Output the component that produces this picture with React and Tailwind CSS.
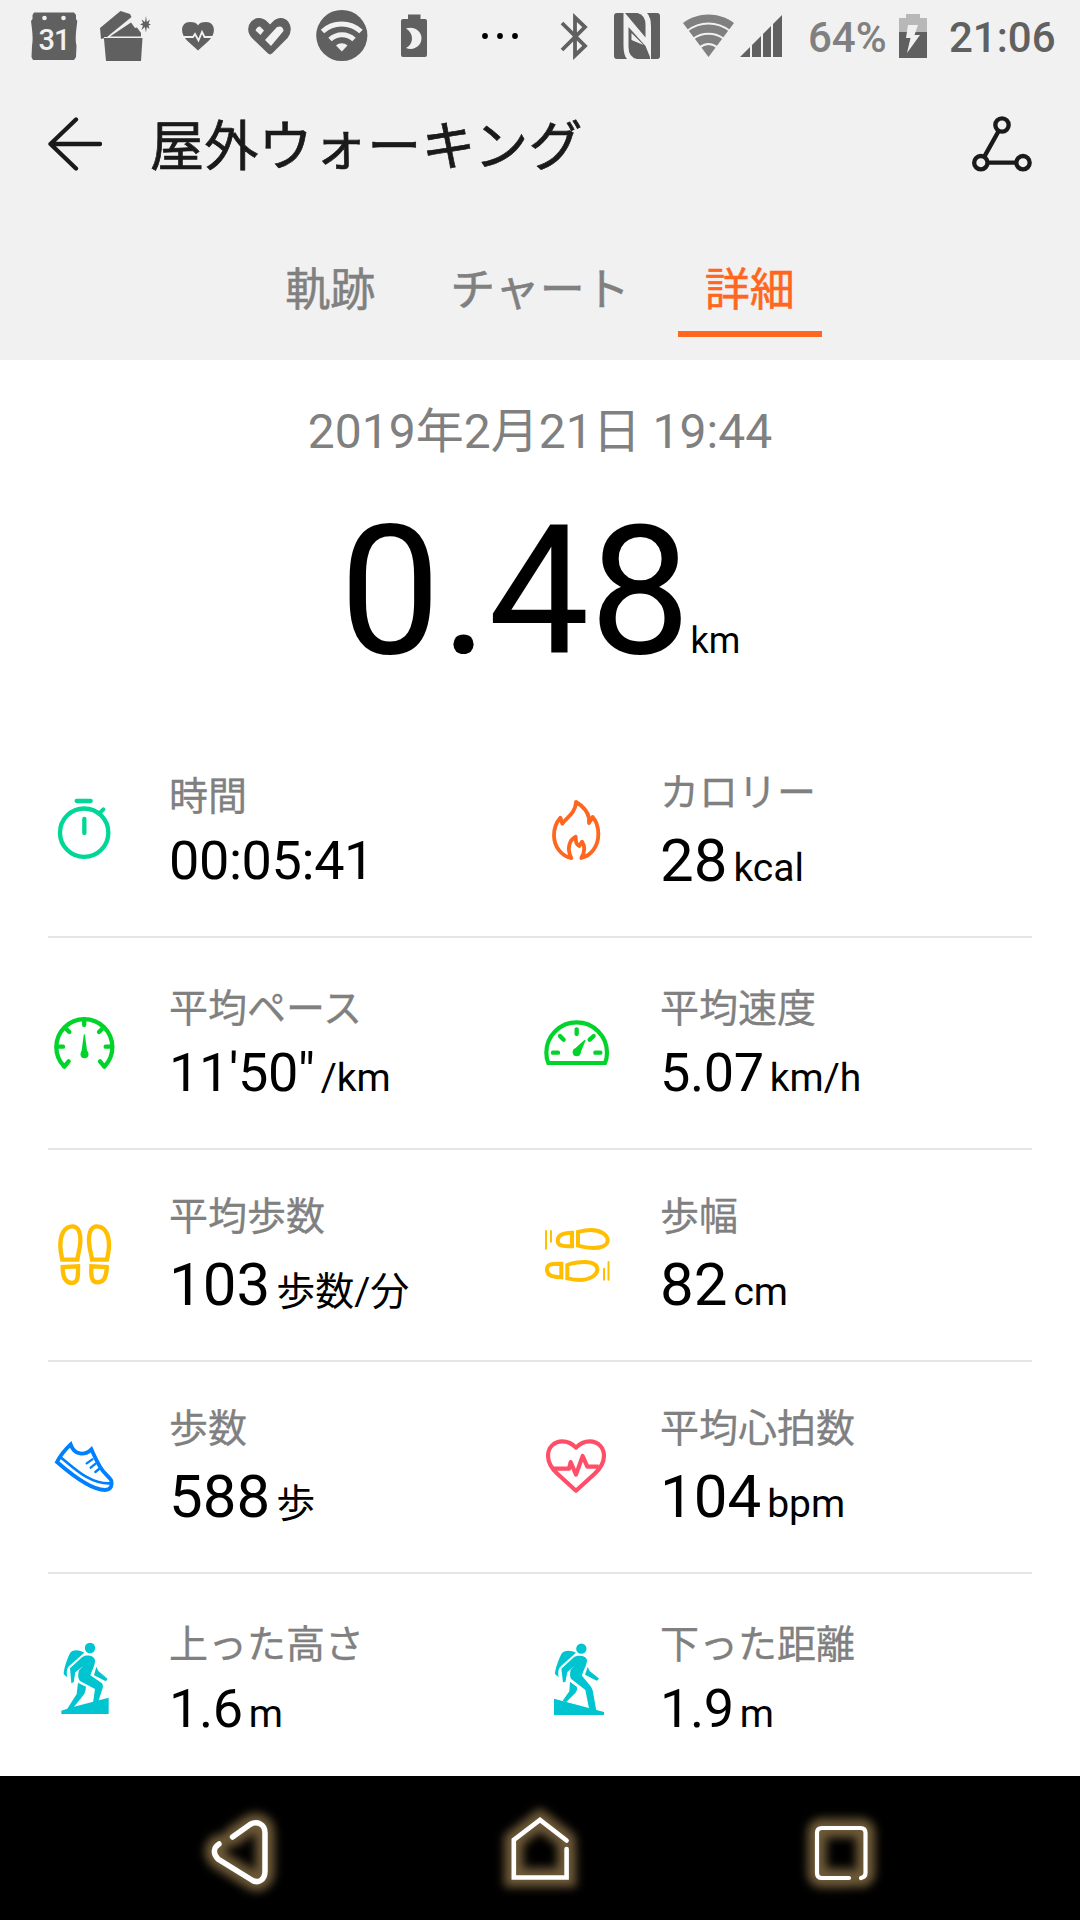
import clsx from 'clsx'

const GREY = '#606060'

/** Status bar glyph. Every glyph shares the bar's own coordinate space. */
function StatusIcon({ x, w, className, children }) {
  return (
    <svg width={w} height={72} viewBox={`${x} 0 ${w} 72`} fill={GREY} className={clsx('shrink-0', className)}>
      {children}
    </svg>
  )
}

function StatusBar() {
  return (
    <div className="flex h-[72px] pl-[31px] font-medium">
      <StatusIcon x={31} w={47}>
        <path d="M34 12.500H74L76 15V19L77.300 21C76 32 75 38 76.500 46L76 57L74 60H33L31.500 57L32 46C33.500 38 32 30 31 21L32.500 19V15Z" />
        <circle cx="44.500" cy="18" r="2.300" fill="#f1f1f1" />
        <circle cx="63.500" cy="18" r="2.300" fill="#f1f1f1" />
        <text x="38.500" y="50.300" fontSize="29" fontWeight="500" letterSpacing="-1" fill="#f1f1f1">31</text>
      </StatusIcon>
      <StatusIcon x={100} w={52} className="ml-[22px]">
        <path d="M100 28L120.500 11L130 14L131.500 17L107 37H104V39L106 61H141L142.500 38H104L101 39Z" />
        <path d="M110 36.500L131 22.500L135 28L137 27.500L141 33V36.500Z" />
        <path d="M146 16L146.800 22L150 19.500L148.500 23.500L151 24.500L148.500 25.500L149.500 29L146.800 27L146 32.500L144.800 27L141.500 30L143 25.500L140 24.500L143 23L141.500 19.500L145 22Z" />
      </StatusIcon>
      <StatusIcon x={182} w={32} className="ml-[30px]">
        <path d="M198 50.500L187.500 41C179 33 181 22 190 22C194 22 197 23 198 25.500C199 23 202 22 206 22C215 22 217 33 208.500 41Z" />
        <path d="M181 37H193L195 34L198.500 40.500L202 32L204.500 37H215" fill="none" stroke="#f1f1f1" strokeWidth="1.800" />
      </StatusIcon>
      <StatusIcon x={247} w={45} className="ml-[33px]">
        <path
          d="M270 51L254.500 36C246 27 257 16 265 24L270 29L275 24C283 16 292 27 285 36Z"
          stroke={GREY}
          strokeWidth="6.500"
          strokeLinejoin="round"
        />
        <path d="M255.500 30.500Q257 26.500 260 26.500L264 30.500L260.500 35Z" fill="#f1f1f1" />
        <path d="M265 40L277 27Q283 25 283.500 31L271 46Z" fill="#f1f1f1" />
      </StatusIcon>
      <StatusIcon x={316} w={52} className="ml-[24px]">
        <circle cx="341.800" cy="35.500" r="25.600" />
        <g fill="none" stroke="#f1f1f1" strokeWidth="5">
          <path d="M322.500 31.500C333 21.500 350 21.500 361 31.500" />
          <path d="M330 39.500C337 33 347 33 354 39.500" />
        </g>
        <path d="M336 45.500C339.500 42.500 344 42.500 347.500 45.500L341.800 51.500Z" fill="#f1f1f1" />
      </StatusIcon>
      <StatusIcon x={401} w={26} className="ml-[33px]">
        <path d="M408 14.500H420.500V19H425Q427 19 427 21V55Q427 57 425 57H403Q401 57 401 55V21Q401 19 403 19H408Z" />
        <path d="M406 28.500C414 26 421.500 31 421.500 38C421.500 46 414 51 406 48C414 44 414 33 406 28.500Z" fill="#f1f1f1" />
      </StatusIcon>
      <StatusIcon x={481} w={38} className="ml-[54px]">
        <g fill="#000">
          <circle cx="485" cy="36" r="2.900" />
          <circle cx="500" cy="36" r="2.900" />
          <circle cx="515" cy="36" r="2.900" />
        </g>
      </StatusIcon>
      <StatusIcon x={560} w={28} className="ml-[41px]">
        <path d="M562 23L585 46L575 55.500V17.500L585 27L562 50" fill="none" stroke={GREY} strokeWidth="3.800" />
      </StatusIcon>
      <StatusIcon x={614} w={46} className="ml-[26px]">
        <rect x="614" y="13" width="46" height="46" rx="3" />
        <path d="M623.500 13H647Q651 17 651 27V59H627Q623.500 55 623.500 46Z" fill="#f1f1f1" />
        <path d="M625 13H637.500Q645.500 15 645.500 25V37.500Z" />
        <path d="M628.500 27L645.500 46L650 57V59H637Q628.500 57 628.500 47Z" />
        <path d="M631.500 33L643.500 45L631.500 40Z" fill="#f1f1f1" />
      </StatusIcon>
      <StatusIcon x={683} w={51} className="ml-[23px]">
        <path d="M683 23C698 11.500 719 11.500 734 23L708.500 57Z" fill="#808080" />
        <g fill="none" stroke="#f1f1f1" strokeWidth="1.900">
          <path d="M687 31C700 21 717 21 730 31" />
          <path d="M693 39C702 32 715 32 724 39" />
          <path d="M699 48C705 43 712 43 718 48" />
        </g>
      </StatusIcon>
      <StatusIcon x={740} w={42} className="ml-[6px]">
        <path d="M740 57L750 47V57ZM752 45L761 36V57H752ZM763 34L771 26V57H763ZM773 24L782 15V57H773Z" />
      </StatusIcon>
      <span className="ml-[26px] w-[91px] shrink-0 text-[42px] leading-[76px] text-[#808080]">64%</span>
      <StatusIcon x={899} w={28}>
        <path d="M899 18H906V14H920V18H927V32H899Z" fill="#b8b8b8" />
        <path d="M899 32H927V58H899Z" />
        <path d="M908 25H918L914.500 35H920L907 53L910.500 38H906Z" fill="#f1f1f1" />
      </StatusIcon>
      <span className="ml-[22px] text-[42px] leading-[76px] text-[#606060]">21:06</span>
    </div>
  )
}

function TitleBar() {
  return (
    <div className="flex h-36 items-center px-12 text-[#1a1a1a]">
      <svg width="54" height="54" viewBox="48 117 54 54" fill="none" stroke="currentColor" strokeWidth="4.300" strokeLinecap="round" strokeLinejoin="round">
        <path d="M50.500 144H100M76 119.500L50.500 144L76 168.500" />
      </svg>
      <h1 className="ml-12 flex-1 pt-[7px] text-[54px] leading-[72px] tracking-[0.3px] [-webkit-text-stroke:0.7px]">屋外ウォーキング</h1>
      <svg width="60" height="56" viewBox="996 108 180 168" fill="none" stroke="currentColor" strokeWidth="13">
        <circle cx="1086" cy="135" r="20" />
        <circle cx="1022.500" cy="248" r="20" />
        <circle cx="1149" cy="248" r="20" />
        <path d="M1076 153L1033 230M1043 248H1129" />
      </svg>
    </div>
  )
}

const TABS = ['軌跡', 'チャート', '詳細']

function Tabs({ active }) {
  return (
    <div className="flex h-36 justify-center gap-[21px] pb-[23px] text-[45px]">
      {TABS.map((tab) => (
        <button
          key={tab}
          type="button"
          className={clsx(
            'border-b-[6px] px-[27px] pt-[34px] leading-[72px] [-webkit-text-stroke:0.5px]',
            tab === active ? 'border-[#ff6720] text-[#ff6720]' : 'border-transparent text-[#808080]',
          )}
        >
          {tab}
        </button>
      ))}
    </div>
  )
}

/* Metric icons: 72px boxes, drawn on a 216 unit grid */
const ICONS = {
  time: {
    color: '#00d796',
    viewBox: '54 135 216 216',
    art: (
      <g fill="none" stroke="currentColor" strokeWidth="13" strokeLinecap="round">
        <circle cx="162.500" cy="248" r="72.500" />
        <path d="M140 153H182M163 207V249" />
        <path d="M208 190L220 178" strokeWidth="12" />
      </g>
    ),
  },
  calories: {
    color: '#ff6720',
    viewBox: '60 135 216 216',
    art: (
      <path
        d="M168 156C188 168 203 184 207 204V219L218 201C231 216 235 235 235 253C235 288 214 317 184 324C195 306 196 290 186 275L178 288C170 284 166 274 167 260C149 269 139 294 154 324C124 318 102 290 102 255C102 236 109 217 121 203L127 221C138 203 166 192 168 156Z"
        fill="none"
        stroke="currentColor"
        strokeWidth="11.500"
        strokeLinejoin="round"
      />
    ),
  },
  pace: {
    color: '#00d42a',
    viewBox: '54 771 216 216',
    art: (
      <>
        <g fill="none" stroke="currentColor" strokeWidth="13" strokeLinecap="round" strokeLinejoin="round">
          <path d="M116 934L103 950A84 84 0 1 1 223 950L210 934" />
          <path d="M162.500 808V825M108 836L118 846M217 836L207 846M84 890H99M242 890H227" />
        </g>
        <path d="M161.500 853H164.500L172 908H154Z" fill="currentColor" />
        <circle cx="163.500" cy="913" r="12" fill="currentColor" />
      </>
    ),
  },
  speed: {
    color: '#00d42a',
    viewBox: '60 771 216 216',
    art: (
      <>
        <path
          d="M85 939C80 928 79 918 79 908A91 91 0 0 1 261 908C261 918 260 928 255 939Z"
          fill="none"
          stroke="currentColor"
          strokeWidth="12.500"
        />
        <path
          d="M170 838V852M120 858L131 869M221 858L209 869M99 908H114M226 908H241"
          stroke="currentColor"
          strokeWidth="13"
          strokeLinecap="round"
        />
        <path d="M194 869L197 871L180 912L160 900Z" fill="currentColor" />
        <circle cx="170" cy="907" r="12" fill="currentColor" />
      </>
    ),
  },
  cadence: {
    color: '#ffbf00',
    viewBox: '54 147 216 216',
    art: (
      <g fill="none" stroke="currentColor" strokeWidth="13">
        <path d="M97 269C94 255 91 240 91 225C91 195 103 169 127 169C145 169 152 188 151 215C150 240 143 255 142 269Z" />
        <path d="M98 291C98 320 105 339 126 339C142 339 145 325 144 289Z" />
        <g transform="translate(328) scale(-1 1)">
          <path d="M97 269C94 255 91 240 91 225C91 195 103 169 127 169C145 169 152 188 151 215C150 240 143 255 142 269Z" />
          <path d="M98 291C98 320 105 337 126 337C142 337 145 325 144 289Z" />
        </g>
      </g>
    ),
  },
  stride: {
    color: '#ffbf00',
    viewBox: '60 147 216 216',
    art: (
      <g fill="none" stroke="currentColor" strokeWidth="12">
        <path d="M156 188C135 188 113 192 113 212C113 229 132 229 156 229Z" />
        <path d="M174 186C190 182 200 180 212 180C240 180 263 194 263 211C263 228 240 234 218 234C200 234 188 231 174 227Z" />
        <path d="M124 281C100 281 81 280 81 298C81 320 100 320 124 322Z" />
        <path d="M142 285C160 278 175 276 195 276C222 276 232 288 232 297C232 318 205 330 180 330C165 330 155 328 142 325Z" />
        <path d="M78 183V236M93 183V215M252 296V329M265.500 276V329" strokeWidth="6" strokeLinecap="round" />
      </g>
    ),
  },
  steps: {
    color: '#0080ff',
    viewBox: '54 783 216 216',
    art: (
      <g fill="none" stroke="currentColor" strokeWidth="11.500">
        <path d="M122 823C106 838 90 858 81 876C120 910 185 960 225 960C244 960 247 945 244 932C238 920 222 912 210 890C198 870 190 852 184 838C164 858 133 856 122 823Z" />
        <path d="M90 860C132 894 180 944 243 940" strokeWidth="8" />
        <path d="M170 880L187 868M182 893L197 881M196 906L207 897" strokeWidth="7" strokeLinecap="round" />
      </g>
    ),
  },
  heart: {
    color: '#ff4e68',
    viewBox: '60 783 216 216',
    art: (
      <g fill="none" stroke="currentColor" strokeWidth="12.500" strokeLinejoin="round">
        <path d="M168 962L112 911C96 896 84 878 84 857C84 832 103 814 127 814C145 814 158 822 168 833C178 822 190 814 209 814C235 814 252 834 252 857C252 878 240 896 224 911Z" />
        <path d="M102 896H147L152 876L168 914L188 858L202 890H236" />
      </g>
    ),
  },
  ascent: {
    color: '#00c4cf',
    viewBox: '54 249 216 216',
    art: (
      <g fill="currentColor">
        <circle cx="180" cy="264" r="15.500" />
        <path d="M163 278C150 270 128 266 119 281C110 300 101 328 101 343L112 352C108 332 112 322 120 316Z" />
        <path d="M120 325L156 292C166 284 190 284 195 300C196 314 186 332 181 346L216 370C220 376 219 382 217 388L207 418L206 428H189L195 387L150 363C143 355 144 344 147 331L161 317L136 337L131 367L124 370Z" />
        <path d="M199 320L205 333L232 356Q233 362 226 363L192 346Z" />
        <path d="M144 368L168 380C167 394 164 400 160 406L132 440L236 413V462H94V452L112 446L140 402Z" />
      </g>
    ),
  },
  descent: {
    color: '#00c4cf',
    viewBox: '60 249 216 216',
    art: (
      <g fill="currentColor">
        <circle cx="184" cy="266" r="15.500" />
        <path d="M168 278C155 271 132 268 124 282C114 304 105 328 105 342L116 352C113 332 116 325 124 317Z" />
        <path d="M124 326L160 293C170 284 197 285 201 300C201 316 188 335 186 347L213 380C217 386 218 390 219 396L229 452L207 445L196 390L153 356C149 348 150 338 152 329L166 316L142 336L136 366L129 367Z" />
        <path d="M203 321L209 333L236 355Q237 361 230 362L195 344Z" />
        <path d="M150 365L171 381C173 390 168 398 163 402L138 427L128 422L148 394Z" />
        <path d="M102 416L252 456V465H102Z" />
      </g>
    ),
  },
}

const METRICS = [
  { icon: 'time', label: '時間', value: '00:05:41' },
  { icon: 'calories', label: 'カロリー', value: '28', unit: 'kcal', large: true },
  { icon: 'pace', label: '平均ペース', value: '11\'50"', unit: '/km' },
  { icon: 'speed', label: '平均速度', value: '5.07', unit: 'km/h' },
  { icon: 'cadence', label: '平均歩数', value: '103', unit: '歩数/分', large: true },
  { icon: 'stride', label: '歩幅', value: '82', unit: 'cm', large: true },
  { icon: 'steps', label: '歩数', value: '588', unit: '歩', large: true },
  { icon: 'heart', label: '平均心拍数', value: '104', unit: 'bpm', large: true },
  { icon: 'ascent', label: '上った高さ', value: '1.6', unit: 'm' },
  { icon: 'descent', label: '下った距離', value: '1.9', unit: 'm' },
]

function Metric({ icon, label, value, unit, large }) {
  const { color, viewBox, art } = ICONS[icon]
  return (
    <div className="flex h-[212px] items-center border-t-2 border-[#e5e5e5] odd:gap-[49px] even:gap-12">
      <svg width="72" height="72" viewBox={viewBox} color={color} className="shrink-0">
        {art}
      </svg>
      <div className="whitespace-nowrap">
        <p className="text-[39px] leading-[59px] text-[#808080] [-webkit-text-stroke:0.3px]">{label}</p>
        <p className={large ? 'text-[60px] leading-[76px]' : 'text-[54px] leading-[68px] tracking-[-0.4px]'}>
          {value}
          {unit && <span className="ml-[6px] text-[39px] leading-none tracking-normal">{unit}</span>}
        </p>
      </div>
    </div>
  )
}

const NAV_ICONS = [
  { x: 180, width: 5.5, d: 'M232.500 1837L250 1824.500C257 1820.500 265 1824 265 1833V1871C265 1880 258 1884.500 251 1879.500L218 1859C213 1854 213 1848 219 1844' },
  { x: 480, width: 4.6, d: 'M566.600 1840.500L540 1820L513.800 1840V1877.500H566.600V1849' },
  { x: 780, width: 4.2, d: 'M849 1878H822Q817 1878 817 1873V1833Q817 1828 822 1828H860.500Q865.500 1828 865.500 1833V1873Q865.500 1877 861 1878' },
]

function NavBar() {
  return (
    <nav className="flex h-36 shrink-0 gap-[180px] bg-black px-[180px]">
      {NAV_ICONS.map(({ x, width, d }) => (
        <svg key={x} width="120" height="144" viewBox={`${x} 1776 120 144`} fill="none" strokeLinecap="round">
          <path d={d} stroke="#6e5a38" strokeWidth="19" className="blur-[5px]" />
          <path d={d} stroke="#fff" strokeWidth={width} />
        </svg>
      ))}
    </nav>
  )
}

export default function App() {
  return (
    <div lang="ja" className="flex h-[1920px] w-[1080px] flex-col overflow-hidden bg-white font-[Roboto,'Noto_Sans_CJK_JP',sans-serif] text-black">
      <header className="shrink-0 bg-[#f1f1f1]">
        <StatusBar />
        <TitleBar />
        <Tabs active="詳細" />
      </header>
      <main className="min-h-0 flex-1 overflow-hidden">
        <section className="h-[364px] pt-[36px] text-center">
          <p className="text-[48px] leading-[72px] text-[#808080]">2019年2月21日 19:44</p>
          <p className="mt-[16px] text-[180px] leading-[216px]">
            0.48<span className="text-[36px] leading-none">km</span>
          </p>
        </section>
        {/* no rule above the first row */}
        <section className="grid grid-cols-2 px-12 [&>*:nth-child(-n+2)]:border-transparent">
          {METRICS.map((metric) => (
            <Metric key={metric.icon} {...metric} />
          ))}
        </section>
      </main>
      <NavBar />
    </div>
  )
}
